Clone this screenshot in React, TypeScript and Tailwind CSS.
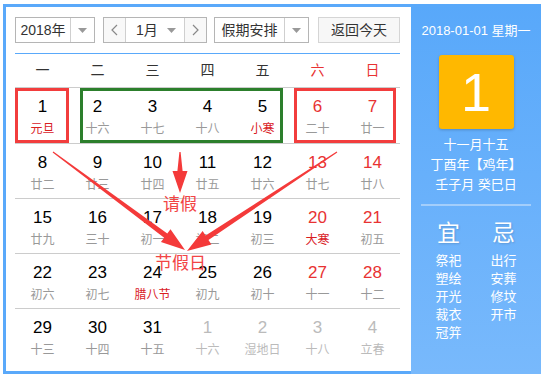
import React from "react";

type Day = { n: string; l: string; red?: boolean; other?: boolean };

const weekdays = ["一", "二", "三", "四", "五", "六", "日"];

const rows: Day[][] = [
  [
    { n: "1", l: "元旦", red: true },
    { n: "2", l: "十六" },
    { n: "3", l: "十七" },
    { n: "4", l: "十八" },
    { n: "5", l: "小寒", red: true },
    { n: "6", l: "二十" },
    { n: "7", l: "廿一" },
  ],
  [
    { n: "8", l: "廿二" },
    { n: "9", l: "廿三" },
    { n: "10", l: "廿四" },
    { n: "11", l: "廿五" },
    { n: "12", l: "廿六" },
    { n: "13", l: "廿七" },
    { n: "14", l: "廿八" },
  ],
  [
    { n: "15", l: "廿九" },
    { n: "16", l: "三十" },
    { n: "17", l: "初一" },
    { n: "18", l: "初二" },
    { n: "19", l: "初三" },
    { n: "20", l: "大寒", red: true },
    { n: "21", l: "初五" },
  ],
  [
    { n: "22", l: "初六" },
    { n: "23", l: "初七" },
    { n: "24", l: "腊八节", red: true },
    { n: "25", l: "初九" },
    { n: "26", l: "初十" },
    { n: "27", l: "十一" },
    { n: "28", l: "十二" },
  ],
  [
    { n: "29", l: "十三" },
    { n: "30", l: "十四" },
    { n: "31", l: "十五" },
    { n: "1", l: "十六", other: true },
    { n: "2", l: "湿地日", other: true },
    { n: "3", l: "十八", other: true },
    { n: "4", l: "立春", other: true },
  ],
];

const yi = ["祭祀", "塑绘", "开光", "裁衣", "冠笄"];
const ji = ["出行", "安葬", "修坟", "开市"];

function Caret() {
  return (
    <svg width="9" height="5" viewBox="0 0 9 5">
      <path d="M0 0 L9 0 L4.5 5 Z" fill="#999" />
    </svg>
  );
}

// tapered arrow like the screenshot tool draws
function arrow(sx: number, sy: number, tx: number, ty: number, head = 22, hw = 8) {
  const dx = tx - sx;
  const dy = ty - sy;
  const len = Math.hypot(dx, dy);
  const ux = dx / len;
  const uy = dy / len;
  const nx = -uy;
  const ny = ux;
  const hx = tx - ux * head;
  const hy = ty - uy * head;
  const pts = [
    [sx + nx * 0.6, sy + ny * 0.6],
    [hx + nx * 2.6, hy + ny * 2.6],
    [hx + nx * hw, hy + ny * hw],
    [tx, ty],
    [hx - nx * hw, hy - ny * hw],
    [hx - nx * 2.6, hy - ny * 2.6],
    [sx - nx * 0.6, sy - ny * 0.6],
  ];
  return pts.map((p) => p.join(",")).join(" ");
}

export default function App() {
  return (
    <div className="relative w-[545px] h-[380px] bg-white pt-[4px] pl-[3px] font-['Liberation_Sans','Noto_Sans_CJK_SC',sans-serif]">
      <div className="flex w-[538px] h-[370px]">
        {/* Left: calendar */}
        <div className="w-[408px] h-full border-l-[3px] border-t-[3px] border-b-[3px] border-[#5aa9fa] bg-white pl-[9px] pt-[10px]">
          {/* Toolbar */}
          <div className="flex h-[26px] w-[385px] text-[14px] text-[#333] whitespace-nowrap">
            <div className="flex w-[80px] border border-[#b5b5b5]">
              <div className="w-[54px] flex items-center justify-center">2018年</div>
              <div className="flex-1 border-l border-[#cfcfcf] flex items-center justify-center">
                <Caret />
              </div>
            </div>
            <div className="flex w-[104px] ml-[8px] border border-[#b5b5b5]">
              <div className="w-[21px] flex items-center justify-center bg-[#f8f8f8]">
                <svg width="7" height="12" viewBox="0 0 7 12">
                  <polyline points="6,1 1,6 6,11" fill="none" stroke="#888" strokeWidth="1.2" />
                </svg>
              </div>
              <div className="flex-1 border-l border-r border-[#cfcfcf] flex items-center justify-between pl-[10px] pr-[8px]">
                <span>1月</span>
                <Caret />
              </div>
              <div className="w-[21px] flex items-center justify-center bg-[#f8f8f8]">
                <svg width="7" height="12" viewBox="0 0 7 12">
                  <polyline points="1,1 6,6 1,11" fill="none" stroke="#888" strokeWidth="1.2" />
                </svg>
              </div>
            </div>
            <div className="flex w-[95px] ml-[7px] border border-[#b5b5b5]">
              <div className="w-[69px] flex items-center justify-center">假期安排</div>
              <div className="flex-1 border-l border-[#cfcfcf] flex items-center justify-center">
                <Caret />
              </div>
            </div>
            <div className="w-[82px] ml-[9px] border border-[#d5d5d5] bg-[#f7f7f7] flex items-center justify-center">
              返回今天
            </div>
          </div>

          <div className="mt-[10px] h-px w-[385px] bg-[#5aa9fa]" />

          {/* Weekday header */}
          <div className="grid grid-cols-7 w-[385px] h-[34px] border-b border-[#cccccc] text-[14px]">
            {weekdays.map((w, i) => (
              <div
                key={w}
                className={`flex items-center justify-center ${i >= 5 ? "text-[#e83232]" : "text-[#333]"}`}
              >
                {w}
              </div>
            ))}
          </div>

          {/* Day rows */}
          {rows.map((row, ri) => (
            <div
              key={ri}
              className={`grid grid-cols-7 w-[385px] h-[55px] ${ri > 0 ? "border-t border-[#cccccc]" : ""}`}
            >
              {row.map((d, ci) => {
                const numColor = d.other ? "text-[#bbbbbb]" : ci >= 5 ? "text-[#e83232]" : "text-black";
                const lunColor = d.other ? "text-[#bbbbbb]" : d.red ? "text-[#d9201f]" : "text-[#999999]";
                return (
                  <div key={ci} className="flex flex-col items-center pt-[9px]">
                    <div className={`text-[17px] leading-[20px] ${numColor}`}>{d.n}</div>
                    <div className={`text-[12px] leading-[16px] mt-[4px] ${lunColor}`}>{d.l}</div>
                  </div>
                );
              })}
            </div>
          ))}
        </div>

        {/* Right: day detail */}
        <div className="w-[130px] h-full bg-gradient-to-b from-[#58a8fa] to-[#78b9fc] text-white flex flex-col items-center">
          <div className="mt-[18px] text-[13px] leading-[18px]">2018-01-01 星期一</div>
          <div className="mt-[15px] w-[75px] h-[74px] rounded-[3px] bg-[#ffb800] shadow-[0_1px_3px_rgba(0,0,0,0.2)] flex items-center justify-center text-[54px] leading-none">
            1
          </div>
          <div className="mt-[6px] text-[13px] leading-[20px] text-center">
            <div>十一月十五</div>
            <div>丁酉年【鸡年】</div>
            <div>壬子月 癸巳日</div>
          </div>
          <div className="mt-[9px] w-[110px] h-[2px] bg-[#a3cefb]" />
          <div className="mt-[14px] grid grid-cols-2 w-[110px]">
            <div className="flex flex-col items-center">
              <div className="text-[23px] leading-[26px] [text-shadow:1px_1px_2px_rgba(0,0,0,0.15)]">宜</div>
              <div className="mt-[6px] text-[13px] leading-[18px] flex flex-col items-center">
                {yi.map((t) => (
                  <div key={t}>{t}</div>
                ))}
              </div>
            </div>
            <div className="flex flex-col items-center">
              <div className="text-[23px] leading-[26px] [text-shadow:1px_1px_2px_rgba(0,0,0,0.15)]">忌</div>
              <div className="mt-[6px] text-[13px] leading-[18px] flex flex-col items-center">
                {ji.map((t) => (
                  <div key={t}>{t}</div>
                ))}
              </div>
            </div>
          </div>
        </div>
      </div>

      {/* Annotation boxes */}
      <div className="absolute left-[15px] top-[88px] w-[54px] h-[55px] border-[3px] border-[#f23d3d]" />
      <div className="absolute left-[80px] top-[88px] w-[203px] h-[55px] border-[3px] border-[#2c7f2c]" />
      <div className="absolute left-[294px] top-[88px] w-[102px] h-[55px] border-[3px] border-[#f23d3d]" />

      {/* Annotation labels */}
      <div className="absolute left-[163px] top-[195px] text-[17px] leading-[20px] text-[#f24545]">请假</div>
      <div className="absolute left-[155px] top-[254px] text-[17px] leading-[20px] text-[#f24545]">节假日</div>

      {/* Annotation arrows */}
      <svg className="absolute left-0 top-0 pointer-events-none" width="545" height="380">
        <polygon points={arrow(53, 152, 185, 250, 24, 8)} fill="#f43a3a" />
        <polygon points={arrow(337, 152, 187, 251, 24, 8)} fill="#f43a3a" />
        <polygon points={arrow(180, 152, 180, 193, 22, 7.5)} fill="#f43a3a" />
      </svg>
    </div>
  );
}
